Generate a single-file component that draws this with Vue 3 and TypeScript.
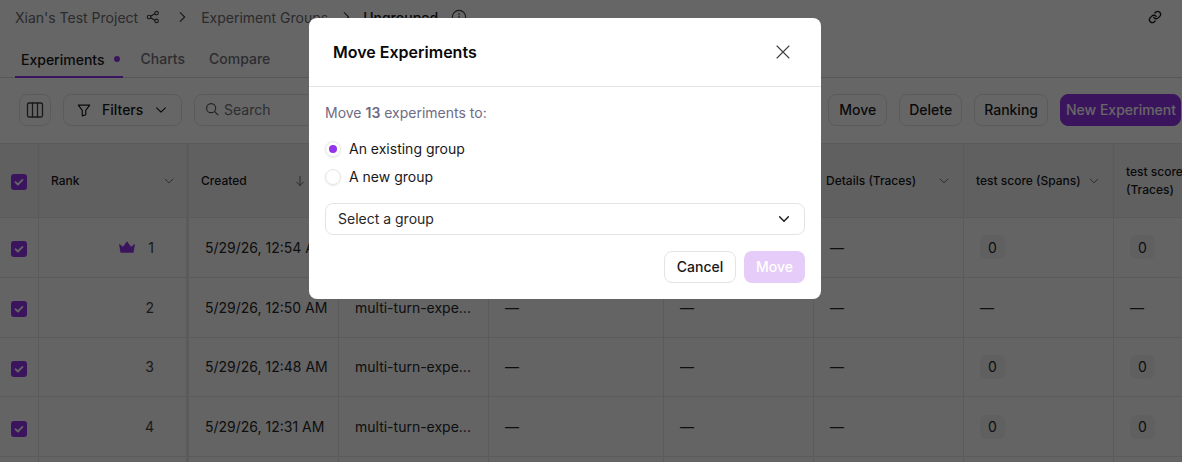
<script setup lang="ts">
interface Row {
  rank: number;
  created: string;
  scores: [string, string];
}

const rows: Row[] = [
  { rank: 1, created: "5/29/26, 12:54 AM", scores: ["0", "0"] },
  { rank: 2, created: "5/29/26, 12:50 AM", scores: ["—", "—"] },
  { rank: 3, created: "5/29/26, 12:48 AM", scores: ["0", "0"] },
  { rank: 4, created: "5/29/26, 12:31 AM", scores: ["0", "0"] },
];
</script>

<template>
  <div class="page">
    <header class="crumbs">
      <span class="crumb first">Xian's Test Project</span>
      <svg class="share" viewBox="0 0 16 16" width="14" height="14">
        <circle cx="3.5" cy="8" r="2" />
        <circle cx="12" cy="3.5" r="2" />
        <circle cx="12" cy="12.5" r="2" />
        <path d="M5.3 7 10.2 4.4M5.3 9l4.9 2.6" />
      </svg>
      <svg class="sep" viewBox="0 0 16 16" width="14" height="14"><path d="m6 3 5 5-5 5" /></svg>
      <span class="crumb">Experiment Groups</span>
      <svg class="sep" viewBox="0 0 16 16" width="14" height="14"><path d="m6 3 5 5-5 5" /></svg>
      <span class="crumb current">Ungrouped</span>
      <svg class="info" viewBox="0 0 18 18" width="16" height="16">
        <circle cx="9" cy="9" r="7.5" />
        <path d="M9 8v5M9 5v1.2" />
      </svg>
      <svg class="link" viewBox="0 0 24 24" width="14" height="14">
        <path d="M10 13a5 5 0 0 0 7.5.5l3-3a5 5 0 0 0-7-7l-1.7 1.7" />
        <path d="M14 11a5 5 0 0 0-7.5-.5l-3 3a5 5 0 0 0 7 7l1.7-1.7" />
      </svg>
    </header>

    <nav class="tabs">
      <span class="tab active">Experiments<i class="dot" /></span>
      <span class="tab">Charts</span>
      <span class="tab">Compare</span>
    </nav>

    <div class="toolbar">
      <button class="btn icon-btn">
        <svg viewBox="0 0 18 18" width="18" height="18" class="ico">
          <rect x="1.5" y="2" width="15" height="14" rx="1.5" />
          <path d="M6.5 2v14M11.5 2v14" />
        </svg>
      </button>
      <button class="btn filters">
        <svg viewBox="0 0 16 16" width="14" height="14" class="ico">
          <path d="M1.5 2.5h13L10 8.5v5l-4 1.2V8.5z" />
        </svg>
        <span>Filters</span>
        <svg viewBox="0 0 16 16" width="14" height="14" class="ico"><path d="m3 5.5 5 5 5-5" /></svg>
      </button>
      <div class="search">
        <svg viewBox="0 0 16 16" width="14" height="14" class="ico dim">
          <circle cx="7" cy="7" r="5.2" />
          <path d="m11 11 3.8 3.8" />
        </svg>
        <span>Search</span>
      </div>
      <button class="btn">Move</button>
      <button class="btn">Delete</button>
      <button class="btn">Ranking</button>
      <button class="btn primary">New Experiment</button>
    </div>

    <div class="table">
      <div class="row head">
        <div class="cell check-cell">
          <span class="check">
            <svg viewBox="0 0 12 12" width="12" height="12"><path d="m2.5 6.2 2.4 2.3 4.6-4.6" /></svg>
          </span>
        </div>
        <div class="cell">
          <span>Rank</span>
          <svg class="caret" viewBox="0 0 16 16" width="12" height="12"><path d="m3 5.5 5 5 5-5" /></svg>
        </div>
        <div class="cell created">
          <span>Created</span>
          <svg class="caret" viewBox="0 0 16 16" width="12" height="12"><path d="M8 2v12M3.5 9.5 8 14l4.5-4.5" /></svg>
        </div>
        <div class="cell" />
        <div class="cell" />
        <div class="cell" />
        <div class="cell">
          <span>Details (Traces)</span>
          <svg class="caret" viewBox="0 0 16 16" width="12" height="12"><path d="m3 5.5 5 5 5-5" /></svg>
        </div>
        <div class="cell">
          <span>test score (Spans)</span>
          <svg class="caret" viewBox="0 0 16 16" width="12" height="12"><path d="m3 5.5 5 5 5-5" /></svg>
        </div>
        <div class="cell wrap"><span>test score<br />(Traces)</span></div>
      </div>

      <div v-for="row in rows" :key="row.rank" class="row body">
        <div class="cell check-cell">
          <span class="check">
            <svg viewBox="0 0 12 12" width="12" height="12"><path d="m2.5 6.2 2.4 2.3 4.6-4.6" /></svg>
          </span>
        </div>
        <div class="cell rank">
          <svg v-if="row.rank === 1" class="crown" viewBox="0 0 16 12" width="16" height="12">
            <path d="M0 2.800 4 5.800 8 .2l4 5.600 4-3-1.500 9h-13z" />
          </svg>
          <span class="num">{{ row.rank }}</span>
        </div>
        <div class="cell text">{{ row.created }}</div>
        <div class="cell text">multi-turn-expe...</div>
        <div class="cell text">—</div>
        <div class="cell text">—</div>
        <div class="cell text">—</div>
        <div v-for="(score, i) in row.scores" :key="i" class="cell text">
          <span v-if="score !== '—'" class="chip">{{ score }}</span>
          <template v-else>—</template>
        </div>
      </div>

      <div class="row body">
        <div v-for="n in 9" :key="n" class="cell" />
      </div>
    </div>

    <div class="overlay">
      <section class="modal">
        <div class="modal-head">
          <h2>Move Experiments</h2>
          <svg class="close" viewBox="0 0 16 16" width="16" height="16"><path d="m2 2 12 12M14 2 2 14" /></svg>
        </div>
        <div class="modal-body">
          <p class="lead">Move <b>13</b> experiments to:</p>
          <label class="radio">
            <span class="mark on" />
            <span class="label">An existing group</span>
          </label>
          <label class="radio">
            <span class="mark" />
            <span class="label">A new group</span>
          </label>
          <div class="select">
            <span class="label">Select a group</span>
            <svg viewBox="0 0 16 16" width="14" height="14"><path d="m3 5.500 5 5 5-5" /></svg>
          </div>
          <div class="actions">
            <button class="btn cancel">Cancel</button>
            <button class="btn confirm">Move</button>
          </div>
        </div>
      </section>
    </div>
  </div>
</template>

<style>
html,
body {
  margin: 0;
  background: #fff;
}
</style>

<style scoped>
.page {
  position: relative;
  width: 1182px;
  height: 462px;
  overflow: hidden;
  background: #fff;
  color: #18181b;
  font-family: Inter, "Liberation Sans", sans-serif;
  font-size: 14px;
}

svg {
  flex: none;
  fill: none;
  stroke: currentColor;
  stroke-width: 1.3;
  stroke-linecap: round;
  stroke-linejoin: round;
}

/* breadcrumb */
.crumbs {
  display: flex;
  align-items: center;
  height: 34px;
  padding: 0 20px 0 15px;
  box-sizing: border-box;
}
.crumb {
  color: #6b6b70;
}
.current {
  color: #18181b;
  font-weight: 500;
}
.share {
  margin-left: 8px;
  color: #3f3f46;
}
.sep {
  margin: 0 12px 0 15px;
  color: #3f3f46;
}
.sep + .crumb + .sep {
  margin: 0 10px 0 11px;
}
.info {
  margin-left: 13px;
  color: #3f3f46;
}
.link {
  margin-left: auto;
  color: #18181b;
  stroke-width: 2.3;
}

/* tabs */
.tabs {
  display: flex;
  height: 44px;
  padding-left: 15px;
  gap: 12px;
  border-bottom: 1px solid #d9d9dc;
  box-sizing: border-box;
}
.tab {
  display: flex;
  align-items: center;
  padding: 6px 6px 0;
  color: #71717a;
  font-weight: 450;
}
.tab.active {
  padding-right: 3px;
  margin-bottom: -1px;
  color: #18181b;
  box-shadow: inset 0 -2px 0 #9333ea;
}
.dot {
  width: 6px;
  height: 6px;
  margin-left: 9px;
  border-radius: 50%;
  background: #9333ea;
}

/* toolbar */
.toolbar {
  display: flex;
  align-items: flex-start;
  gap: 12px;
  height: 66px;
  padding: 16px 1px 0 19px;
  border-bottom: 1px solid #e4e4e7;
  box-sizing: border-box;
}
.btn {
  min-width: 59px;
  height: 32px;
  padding: 0 9px 2px;
  border: 1px solid #e4e4e7;
  border-radius: 8px;
  background: #fff;
  color: #18181b;
  font: 450 14px Inter, "Liberation Sans", sans-serif;
  white-space: nowrap;
}
.icon-btn {
  display: flex;
  align-items: center;
  justify-content: center;
  min-width: 0;
  width: 32px;
  padding: 0;
  color: #3f3f46;
}
.filters {
  display: flex;
  align-items: center;
  gap: 11px;
  width: 119px;
  padding: 0 13px 2px;
}
.filters svg {
  margin-top: 2px;
}
.search {
  display: flex;
  flex: 1;
  align-items: center;
  gap: 5px;
  height: 32px;
  padding: 0 0 2px 10px;
  box-sizing: border-box;
  border: 1px solid #e4e4e7;
  border-radius: 8px;
  color: #71717a;
}
.dim {
  color: #52525b;
}
.primary {
  padding: 0 5px 2px;
  width: 121px;
  border-color: #9333ea;
  background: #9333ea;
  color: #fff;
}

/* table */
.row {
  display: grid;
  grid-template-columns: 39px 150px 150px 150px 175px 150px 150px 150px 1fr;
  border-bottom: 1px solid #e4e4e7;
  box-sizing: border-box;
}
.head {
  height: 74px;
  background: #f0f0f1;
  font-size: 12px;
  font-weight: 450;
}
.body {
  height: 59.8px;
  background: #fafafa;
}
.cell {
  display: flex;
  align-items: center;
  justify-content: space-between;
  min-width: 0;
  padding: 0 13px 0 12px;
  border-right: 1px solid #e4e4e7;
  white-space: nowrap;
}
.row > .cell:nth-child(2) {
  padding-right: 11px;
  border-right-width: 3px;
}
.row > .cell:last-child {
  border-right: 0;
}
.row > .created {
  padding-right: 32px;
}
.check-cell {
  justify-content: center;
  padding: 4px 0 0;
}
.head .check-cell {
  padding-top: 2px;
}
.wrap {
  line-height: 18px;
  overflow: hidden;
}
.check {
  display: flex;
  align-items: center;
  justify-content: center;
  width: 16px;
  height: 16px;
  border-radius: 3px;
  background: #9333ea;
  color: #fff;
}
.check svg {
  stroke-width: 1.8;
}
.caret {
  color: #52525b;
  stroke-width: 1.1;
}
.text {
  justify-content: flex-start;
  padding-left: 16px;
  color: #27272a;
}
.row > .cell.rank {
  justify-content: flex-end;
  gap: 13px;
  padding-right: 32px;
  color: #3f3f46;
}
.crown {
  fill: #9333ea;
  stroke: none;
}
.chip {
  display: flex;
  align-items: center;
  justify-content: center;
  width: 25px;
  height: 24px;
  border-radius: 6px;
  background: #f0f0f1;
}

/* dialog */
.overlay {
  position: absolute;
  inset: 0;
  padding: 18px 0 0 309px;
  background: rgba(0, 0, 0, 0.6);
}
.modal {
  width: 512px;
  height: 281px;
  border-radius: 8px;
  background: #fff;
}
.modal-head {
  display: flex;
  align-items: center;
  justify-content: space-between;
  height: 69px;
  padding: 0 30px 0 24px;
  border-bottom: 1px solid #e4e4e7;
  box-sizing: border-box;
}
.modal-head h2 {
  margin: 0;
  color: #09090b;
  font-size: 16px;
  font-weight: 600;
}
.close {
  color: #3f3f46;
  stroke-width: 1.1;
}
.modal-body {
  padding: 0 16px;
}
.lead {
  margin: 0;
  padding-top: 16px;
  height: 28px;
  line-height: 20px;
  color: #6e6b85;
}
.lead b {
  font-weight: 600;
}
.radio {
  display: flex;
  align-items: center;
  gap: 8px;
  height: 28px;
  color: #18181b;
}
.label {
  margin-bottom: 2px;
}
.lead + .radio {
  margin-top: 4px;
}
.mark {
  display: flex;
  align-items: center;
  justify-content: center;
  width: 16px;
  height: 16px;
  box-sizing: border-box;
  border: 1px solid #e4e4e7;
  border-radius: 50%;
  box-shadow: 0 1px 2px rgba(0, 0, 0, 0.08);
}
.mark.on::after {
  content: "";
  width: 8px;
  height: 8px;
  border-radius: 50%;
  background: #9333ea;
}
.select {
  display: flex;
  align-items: center;
  justify-content: space-between;
  height: 32px;
  margin-top: 12px;
  padding: 0 13px 0 12px;
  box-sizing: border-box;
  border: 1px solid #e4e4e7;
  border-radius: 8px;
  color: #27272a;
}
.select svg {
  color: #18181b;
  stroke-width: 1.6;
}
.actions {
  display: flex;
  justify-content: flex-end;
  gap: 8px;
  margin-top: 16px;
}
.cancel {
  width: 72px;
  padding: 0 0 2px;
}
.confirm {
  width: 61px;
  padding: 0 0 2px;
  border: 0;
  background: #e6ccf8;
  color: #fff;
}
</style>
